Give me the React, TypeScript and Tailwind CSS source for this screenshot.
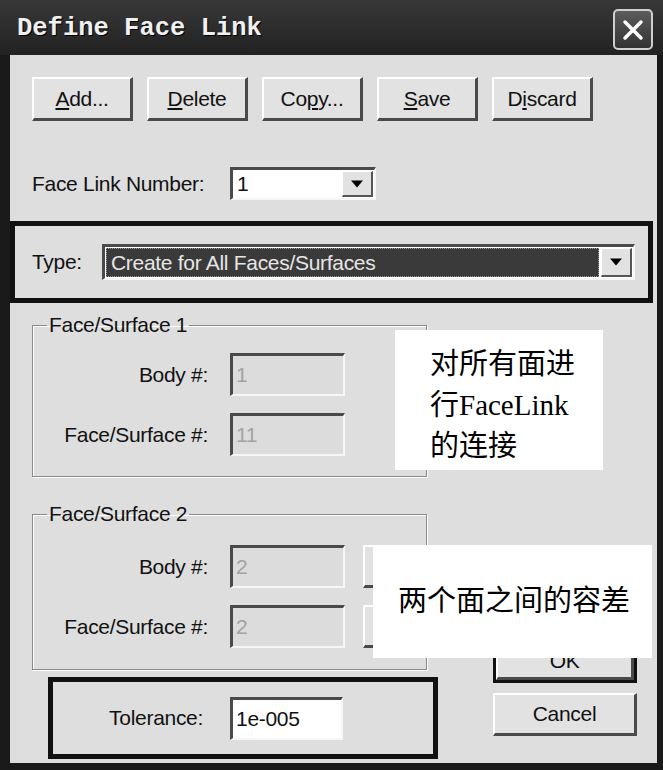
import React from "react"

function Btn({ children, className = "" }: { children: React.ReactNode; className?: string }) {
  return (
    <div
      className={
        "flex items-center justify-center bg-[#e2e2e2] border-t-2 border-l-2 border-r-[3px] border-b-[3px] border-t-white border-l-white border-r-[#4a4a4a] border-b-[#4a4a4a] " +
        className
      }
    >
      {children}
    </div>
  )
}

function DropBtn() {
  return (
    <div className="w-[31px] self-stretch flex items-center justify-center bg-[#e2e2e2] border-t border-l border-r-2 border-b-2 border-t-white border-l-white border-r-[#555] border-b-[#555]">
      <svg width="12" height="8" viewBox="0 0 12 8">
        <path d="M0 0.5h12L6 7.5z" fill="#000" />
      </svg>
    </div>
  )
}

function Field({ value, disabled, className = "" }: { value: string; disabled?: boolean; className?: string }) {
  return (
    <div
      className={
        "flex items-start pl-[3px] pt-[3px] border-t-[3px] border-l-[3px] border-b-2 border-r-2 border-t-[#4a4a4a] border-l-[#4a4a4a] border-b-[#f6f6f6] border-r-[#f6f6f6] " +
        (disabled ? "bg-[#dcdcdc] text-[#a3a3a3] " : "bg-white text-[#111] ") +
        className
      }
    >
      {value}
    </div>
  )
}

function Group({
  title,
  rows,
  extra,
  className = "",
  rowTop,
}: {
  title: string
  rows: { label: string; value: string }[]
  extra?: boolean
  className?: string
  rowTop: string
}) {
  return (
    <fieldset
      className={
        "ml-[22px] w-[395px] border border-[#8a8a8a] shadow-[inset_1px_1px_0_#fff,1px_1px_0_#fff] " + className
      }
    >
      <legend className="ml-[14px] px-[2px] leading-[24px]">{title}</legend>
      <div className={"flex flex-col " + rowTop}>
        {rows.map((r, i) => (
          <div key={r.label} className={"flex items-center " + (i === 1 ? "mt-[17px]" : "")}>
            <span className="w-[175px] text-right">{r.label}</span>
            <Field value={r.value} disabled className="ml-[22px] w-[115px] h-[43px]" />
            {extra && <Btn className="ml-[18px] w-[44px] h-[43px]"> </Btn>}
          </div>
        ))}
      </div>
    </fieldset>
  )
}

export default function App() {
  return (
    <div className="w-[663px] h-[770px] bg-[#1a1a1a] flex flex-col overflow-hidden font-['Liberation_Sans',sans-serif]">
      <div className="h-[55px] shrink-0 flex items-center justify-between pl-[17px] pr-[10px] bg-linear-to-b from-[#383838] to-[#222]">
        <span className="pt-[4px] font-['Liberation_Mono',monospace] font-bold text-[25.5px] text-[#f0f0f0] [text-shadow:1px_1px_0_#000]">
          Define Face Link
        </span>
        <div className="mt-[4px] w-[40px] h-[41px] rounded-[5px] border-2 border-[#cfcfcf] bg-linear-to-b from-[#5c5c5c] to-[#333] flex items-center justify-center">
          <svg width="22" height="22" viewBox="0 0 22 22">
            <path d="M3 3L19 19M19 3L3 19" stroke="#fff" strokeWidth="3.5" strokeLinecap="round" />
          </svg>
        </div>
      </div>

      <div className="relative ml-[10px] mr-[6px] h-[708px] bg-[#dedede] text-[21px] text-[#111] tracking-[-0.3px]">
        <div className="mt-[22px] pl-[22px] flex gap-[14px] h-[44px]">
          <Btn className="w-[101px]">
            <span>
              <span className="underline">A</span>dd...
            </span>
          </Btn>
          <Btn className="w-[101px]">
            <span>
              <span className="underline">D</span>elete
            </span>
          </Btn>
          <Btn className="w-[101px]">
            <span>
              Co<span className="underline">p</span>y...
            </span>
          </Btn>
          <Btn className="w-[101px]">
            <span>
              <span className="underline">S</span>ave
            </span>
          </Btn>
          <Btn className="w-[101px]">
            <span>
              D<span className="underline">i</span>scard
            </span>
          </Btn>
        </div>

        <div className="mt-[46px] pl-[22px] flex items-center h-[33px]">
          <span className="w-[198px]">Face Link Number:</span>
          <div className="w-[146px] h-[33px] flex bg-white border-t-[3px] border-l-[3px] border-b-2 border-r-2 border-t-[#4a4a4a] border-l-[#4a4a4a] border-b-[#f6f6f6] border-r-[#f6f6f6] p-[1px]">
            <span className="flex-1 pl-[3px] leading-[26px]">1</span>
            <DropBtn />
          </div>
        </div>

        <div className="mt-[21px] mr-[4px] h-[82px] border-[5px] border-[#111] flex items-center pl-[17px] pr-[13px]">
          <span className="w-[70px]">Type:</span>
          <div className="flex-1 h-[36px] flex bg-white border-t-[3px] border-l-[3px] border-b-2 border-r-2 border-t-[#4a4a4a] border-l-[#4a4a4a] border-b-[#f6f6f6] border-r-[#f6f6f6] p-[1px]">
            <div className="flex-1 mr-[2px] bg-[#3a3a3a] border border-dotted border-[#999] text-[#e6e6e6] pl-[4px] leading-[27px]">
              Create for All Faces/Surfaces
            </div>
            <DropBtn />
          </div>
        </div>

        <div className="flex">
          <div className="w-[428px] flex flex-col">
            <Group
              title="Face/Surface 1"
              className="mt-[10px] pb-[20px]"
              rowTop="mt-[16px]"
              rows={[
                { label: "Body #:", value: "1" },
                { label: "Face/Surface #:", value: "11" },
              ]}
            />
            <Group
              title="Face/Surface 2"
              className="mt-[25px] pb-[21px]"
              rowTop="mt-[19px]"
              extra
              rows={[
                { label: "Body #:", value: "2" },
                { label: "Face/Surface #:", value: "2" },
              ]}
            />
            <div className="mt-[7px] ml-[38px] w-[390px] h-[82px] border-[5px] border-[#111] flex items-center">
              <span className="w-[150px] text-right">Tolerance:</span>
              <Field value="1e-005" className="ml-[27px] w-[113px] h-[43px]" />
            </div>
          </div>
          <div className="flex-1 flex flex-col justify-end pl-[55px] pb-[23px] gap-[10px]">
            <div className="w-[144px] h-[44px] border-[3px] border-[#111] flex">
              <Btn className="flex-1">OK</Btn>
            </div>
            <Btn className="w-[144px] h-[43px]">Cancel</Btn>
          </div>
        </div>

        <div className="absolute left-[385px] top-[275px] w-[208px] h-[140px] bg-white pl-[35px] pt-[14px] text-[29px] leading-[41px] tracking-normal text-black font-['Liberation_Serif','Noto_Sans_CJK_SC',serif]">
          对所有面进
          <br />
          行FaceLink
          <br />
          的连接
        </div>
        <div className="absolute left-[363px] top-[490px] w-[279px] h-[113px] bg-white pl-[25px] flex items-center text-[29px] tracking-normal text-black font-['Liberation_Serif','Noto_Sans_CJK_SC',serif]">
          两个面之间的容差
        </div>
      </div>
    </div>
  )
}
